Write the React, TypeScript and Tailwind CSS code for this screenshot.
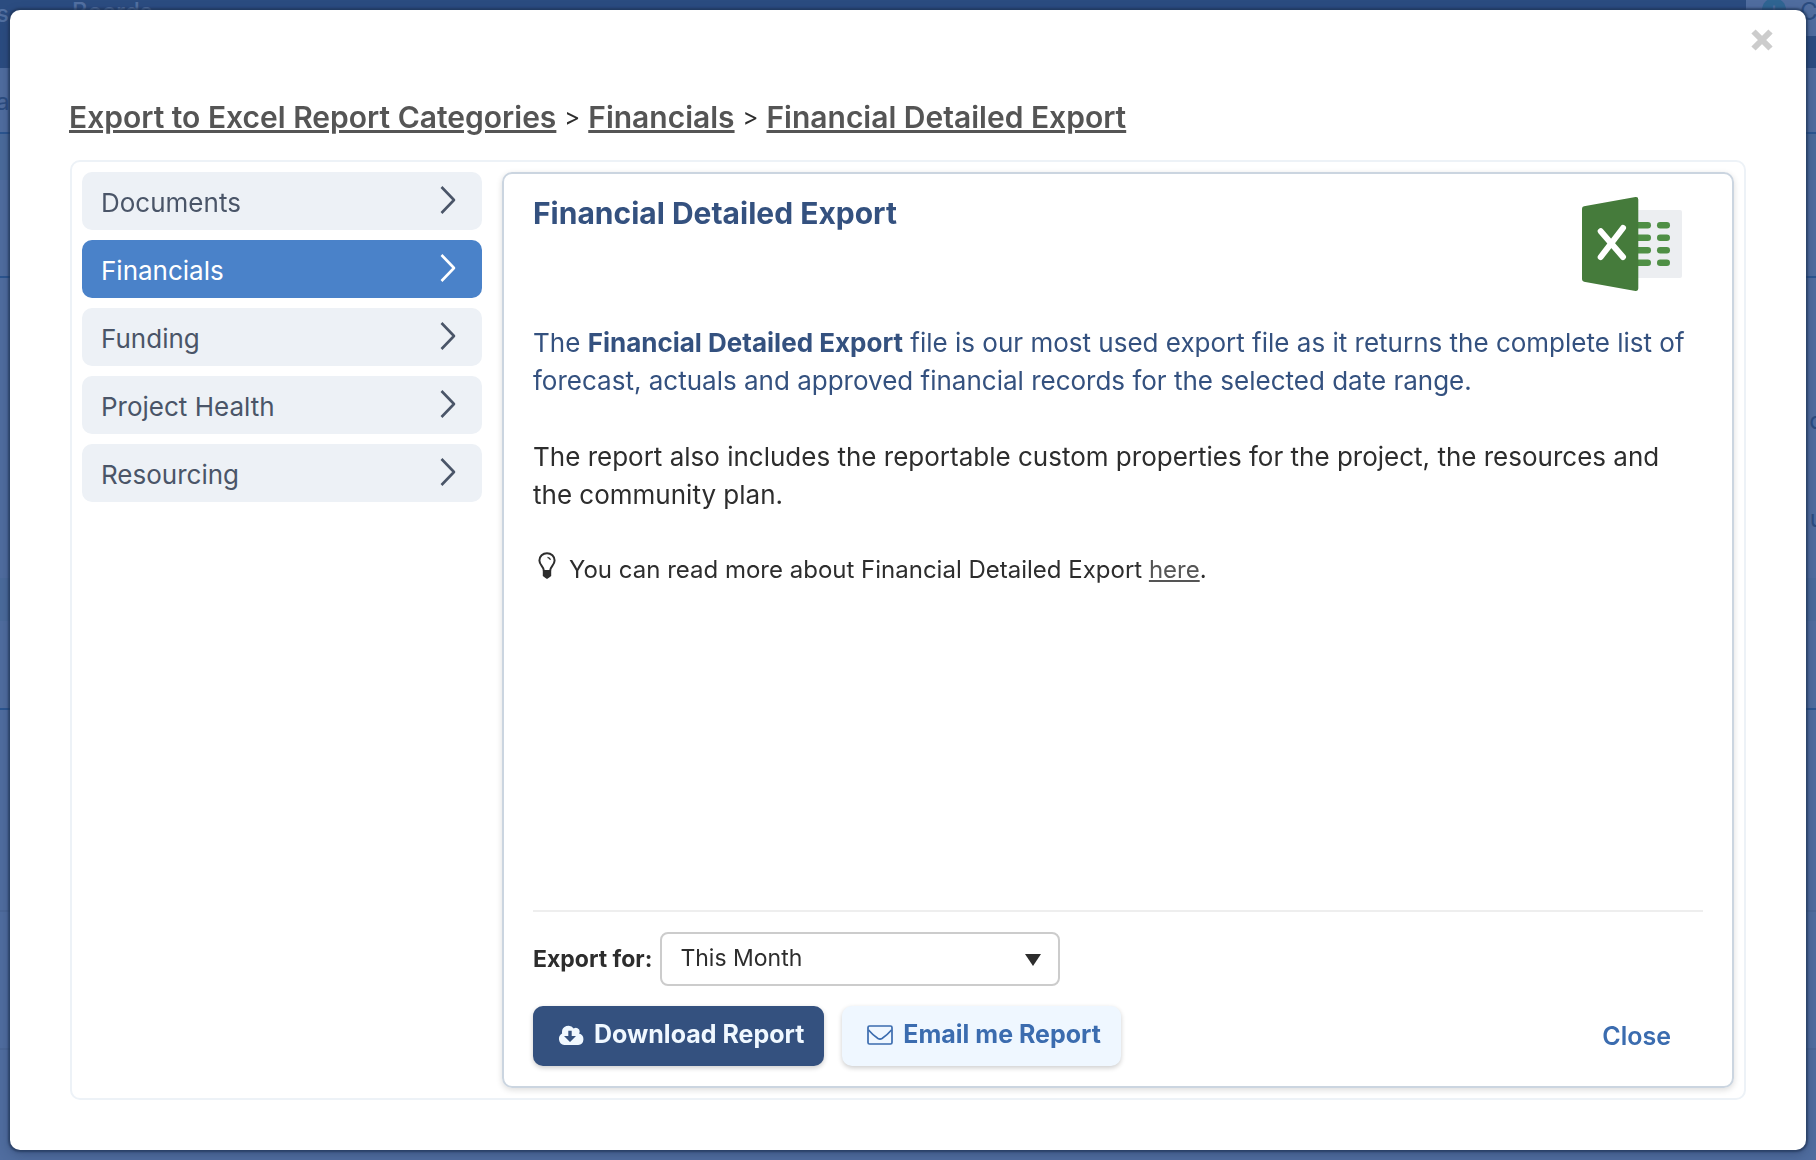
import { useState } from "react";

const categories = [
  "Documents",
  "Financials",
  "Funding",
  "Project Health",
  "Resourcing",
];

const crumbs = [
  "Export to Excel Report Categories",
  "Financials",
  "Financial Detailed Export",
];

const ranges = ["This Month", "Last Month", "This Quarter", "This Year"];

function ChevronIcon() {
  return (
    <svg width="16" height="28" viewBox="0 0 16 28" fill="none" stroke="currentColor" strokeWidth="2.6">
      <path d="M1.5 1 14 14 1.5 27" strokeLinejoin="round" />
    </svg>
  );
}

function CloseIcon() {
  return (
    <svg width="22" height="22" viewBox="0 0 22 22" stroke="currentColor" strokeWidth="6">
      <path d="M2.5 2.5 19.5 19.5M19.5 2.5 2.5 19.5" />
    </svg>
  );
}

function ExcelLogo() {
  return (
    <svg width="100" height="94" viewBox="0 0 100 94">
      <rect x="50" y="13" width="50" height="68" rx="2" fill="#eceef1" />
      <g fill="#4f8f45">
        {[25, 37.5, 50, 62.5].map((y) => (
          <g key={y}>
            <rect x="50" y={y} width="19" height="6.4" rx="3.2" />
            <rect x="75" y={y} width="13" height="6.4" rx="3.2" />
          </g>
        ))}
      </g>
      <path
        d="M2 9.3 53.5.1q2.8-.3 2.8 2.4v89q0 2.8-2.8 2.4L2 84.7q-2-.5-2-2.4V11.7q0-2 2-2.4z"
        fill="#457b3b"
      />
      <path d="M18.7 34.2 41 60M41 31 18.7 60" stroke="#fff" strokeWidth="6" strokeLinecap="round" />
    </svg>
  );
}

function BulbIcon() {
  return (
    <svg width="18" height="28" viewBox="0 0 18 28" fill="none" stroke="currentColor">
      <path
        d="M5.8 18.5C5.8 14.500 1.400 13 1.400 8.500a7.600 7.300 0 0 1 15.200 0c0 4.500-4.400 6-4.400 10"
        strokeWidth="2"
      />
      <path d="M9.500 5.300q2.300.300 3 2.500" strokeWidth="1.300" />
      <path d="M4.800 18h8.400v6l-2 1.500-2.200 1.500-2.200-1.500-2-1.500z" fill="currentColor" stroke="none" />
    </svg>
  );
}

function CloudDownloadIcon() {
  return (
    <svg width="26" height="20" viewBox="0 0 26 20">
      <path
        d="M21 8.600c.5-.8.7-1.500.7-2.200a3.700 3.700 0 0 0-6-2.800A6.400 6.400 0 0 0 4 7.500l.1 1A6.200 6.200 0 0 0 6.200 20h14a5.800 5.800 0 0 0 .8-11.400z"
        fill="currentColor"
      />
      <path d="M10.300 5.800h3.400v5.200h4.300L12 17l-6-6h4.300z" fill="#34517f" />
    </svg>
  );
}

function EnvelopeIcon() {
  return (
    <svg width="26" height="20" viewBox="0 0 26 20" fill="none" stroke="currentColor" strokeWidth="1.700">
      <rect x="1" y="1" width="24" height="18" rx="1.500" />
      <path d="M1.500 5c3 3.500 6.500 6.500 9.500 8.500q2 1.200 4 0c3-2 6.500-5 9.500-8.500" />
    </svg>
  );
}

// The board page that stays behind the overlay
function BoardBackdrop() {
  return (
    <div aria-hidden="true" className="flex min-h-screen flex-col overflow-hidden bg-[#506d9f] text-2xl leading-6 text-[#2b4c80]">
      <div className="flex h-[68px] items-start justify-between bg-[#2b4c80] text-[#5270a1]">
        <div className="flex font-medium">
          <span className="-ml-1 w-[76px] pt-0.5">s</span>
          <span>Boards</span>
        </div>
        <div className="flex h-9 w-[70px] items-start gap-[14px] overflow-hidden bg-[#506d9f] pl-4 text-[#2b4c80]">
          <span className="-mt-0.5 flex size-6 shrink-0 items-center justify-center rounded-full bg-[#2f6592] text-[#5270a1]">+</span>
          <span>C</span>
        </div>
      </div>
      <div className="h-[66px] border-b-2 border-[#2b5590] pt-[22px]">
        <span className="-ml-1">a</span>
      </div>
      <div className="h-36 border-b-2 border-[#2b5590]">
        <div className="h-[46px] bg-[#4b6b9b]" />
      </div>
      <div className="-mr-2 flex h-[300px] flex-col items-end gap-[74px] pt-[131px]">
        <span>d</span>
        <span>u</span>
      </div>
      <div className="h-[132px] border-b-2 border-[#2b5590]">
        <div className="h-[43px] bg-[#4b6b9b]" />
      </div>
      <div className="h-[202px] border-b-2 border-[#4b6797]" />
      <div className="h-[138px] border-b-2 border-[#4b6797]" />
    </div>
  );
}

export default function App() {
  const [active, setActive] = useState("Financials");
  const [range, setRange] = useState("This Month");

  return (
    <div className="relative font-['Inter',sans-serif] text-[#2d2d2d]">
      <BoardBackdrop />

      <div
        role="dialog"
        aria-label="Export to Excel"
        className="fixed inset-[10px] flex flex-col overflow-auto rounded-[10px] bg-white px-[60px] pb-[50px] shadow-[0_0_2px_2px_rgba(30,50,85,0.65),0_4px_12px_rgba(30,50,85,0.4)]"
      >
        <div className="-mr-[27px] flex h-[72px] justify-end pt-[19px]">
          <button type="button" aria-label="Close dialog" className="h-[22px] text-[#cccccc]">
            <CloseIcon />
          </button>
        </div>

        {/* Breadcrumbs */}
        <nav className="-ml-px flex h-[78px] items-start gap-2 pt-[17px] text-[30px] leading-9 font-semibold">
          {crumbs.map((crumb, i) => (
            <span key={crumb} className="flex items-center gap-2">
              {i > 0 && <span className="text-2xl font-normal">&gt;</span>}
              <a href="#" className="text-[#555555] underline">
                {crumb}
              </a>
            </span>
          ))}
        </nav>

        <div className="flex flex-1 gap-5 rounded-[10px] border-2 border-[#edf2f7] p-[10px]">
          {/* Category menu */}
          <nav className="flex w-[400px] shrink-0 flex-col gap-[10px]">
            {categories.map((name) => (
              <button
                key={name}
                type="button"
                onClick={() => setActive(name)}
                className={
                  "flex h-[58px] items-center justify-between rounded-[10px] pr-[26px] pb-0.5 pl-[19px] text-[26px] " +
                  (name === active
                    ? "bg-[#4a82c9] text-white"
                    : "bg-[#edf1f6] text-[#4a5568]")
                }
              >
                <span className="pt-1">{name}</span>
                <ChevronIcon />
              </button>
            ))}
          </nav>

          {/* Report details */}
          <section className="flex flex-1 flex-col rounded-[10px] border-2 border-[#cbd5e0] px-[29px] pb-5 shadow-[0_2px_6px_rgba(0,0,0,0.14)]">
            <header className="flex h-[150px] items-start justify-between pt-[23px] pr-[21px]">
              <h1 className="text-[30px] leading-8 font-bold text-[#34517f]">
                Financial Detailed Export
              </h1>
              <ExcelLogo />
            </header>

            <div className="flex-1 text-[26px] leading-[38px]">
              <p className="text-[#34517f]">
                The <strong>Financial Detailed Export</strong> file is our most
                used export file as it returns the complete list of forecast,
                actuals and approved financial records for the selected date
                range.
              </p>
              <p className="mt-[38px]">
                The report also includes the reportable custom properties for
                the project, the resources and the community plan.
              </p>
              <div className="mt-[38px] flex items-start gap-[13px] pl-[5px] text-2xl leading-9">
                <BulbIcon />
                <p>
                  You can read more about Financial Detailed Export{" "}
                  <a href="#" className="text-[#555555] underline">
                    here
                  </a>
                  .
                </p>
              </div>
            </div>

            <footer className="border-t-2 border-[#eeeeee] pt-5">
              <div className="flex items-center gap-2">
                <label htmlFor="range" className="text-[23px] font-bold">
                  Export for:
                </label>
                <div className="relative">
                  <select
                    id="range"
                    value={range}
                    onChange={(e) => setRange(e.target.value)}
                    className="h-[54px] w-[400px] appearance-none rounded-[8px] border-2 border-[#cccccc] bg-white pb-0.5 pl-[18px] text-[23px]"
                  >
                    {ranges.map((r) => (
                      <option key={r}>{r}</option>
                    ))}
                  </select>
                  <svg
                    width="16"
                    height="12"
                    viewBox="0 0 16 12"
                    className="pointer-events-none absolute top-[22px] right-[19px]"
                  >
                    <path d="M0 0h16L8 12z" fill="#2d2d2d" />
                  </svg>
                </div>
              </div>

              <div className="mt-5 flex h-[60px] items-center gap-[18px] text-[25px] font-bold">
                <button
                  type="button"
                  className="flex h-full items-center gap-[10px] rounded-[10px] bg-[#34517f] pr-5 pb-0.5 pl-[25px] text-[#f0f8ff] shadow-[0_2px_5px_rgba(0,0,0,0.2)]"
                >
                  <CloudDownloadIcon />
                  Download Report
                </button>
                <button
                  type="button"
                  className="flex h-full items-center gap-[10px] rounded-[10px] bg-[#eff7ff] pr-5 pb-0.5 pl-[25px] text-[#3b6caf] shadow-[0_2px_5px_rgba(0,0,0,0.2)]"
                >
                  <EnvelopeIcon />
                  Email me Report
                </button>
                <button type="button" className="mr-8 ml-auto pt-0.5 font-semibold text-[#3b6caf]">
                  Close
                </button>
              </div>
            </footer>
          </section>
        </div>
      </div>
    </div>
  );
}
